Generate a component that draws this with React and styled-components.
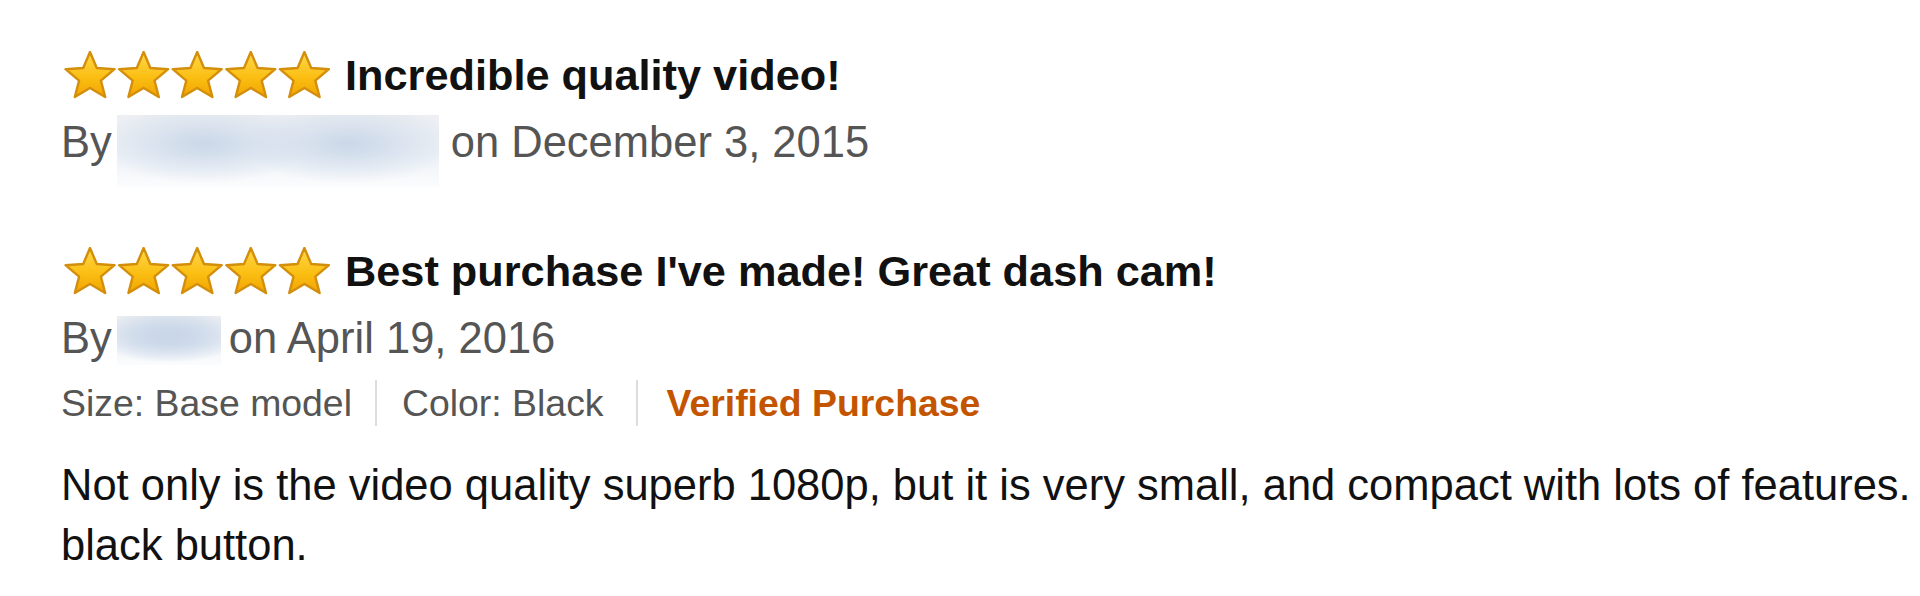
import React from 'react'
import styled, { createGlobalStyle } from 'styled-components'

const GlobalStyle = createGlobalStyle`
    html, body {
        margin: 0;
        padding: 0;
        background: #ffffff;
        overflow: hidden;
    }
    body {
        font-family: "Liberation Sans", Arial, sans-serif;
        color: #111111;
    }
`

const Page = styled.div`
    padding: 50px 0 0 61px;
    width: 1859px;
    height: 546px;
    overflow: hidden;
`

const Review = styled.div`
    display: flex;
    flex-direction: column;
    margin-top: ${props => props.$first ? 0 : 74}px;
`

const TitleRow = styled.div`
    display: flex;
    align-items: center;
    height: 50px;
`

const StarsSvg = styled.svg`
    flex-shrink: 0;
    margin-left: 2px;
`

const Title = styled.span`
    font-size: 43.3px;
    font-weight: bold;
    color: #111111;
    margin-left: 14px;
    white-space: nowrap;
`

const ByLine = styled.div`
    display: flex;
    align-items: center;
    height: 60px;
    margin-top: 12px;
    font-size: 43.5px;
    color: #555555;
    white-space: nowrap;
`

const NameBlur = styled.div`
    align-self: flex-start;
    width: ${props => props.$width}px;
    height: ${props => props.$height}px;
    margin-top: ${props => props.$top}px;
    margin-left: 5px;
    margin-right: ${props => props.$gap}px;
    flex-shrink: 0;
    background:
        radial-gradient(ellipse ${props => props.$spread}% 55% at ${props => props.$blobA}% 40%, rgba(200, 214, 232, 0.95), rgba(200, 214, 232, 0) 100%),
        radial-gradient(ellipse ${props => props.$spread}% 55% at ${props => props.$blobB}% 40%, rgba(200, 214, 232, 0.95), rgba(200, 214, 232, 0) 100%),
        linear-gradient(#edeff2, #eef2f7 55%, #fbfcfd);
`

const Meta = styled.div`
    display: flex;
    align-items: center;
    height: 50px;
    margin-top: 10px;
    font-size: 37.4px;
    color: #555555;
    white-space: nowrap;
`

const MetaItem = styled.span`
    display: flex;
    align-items: center;
    height: 46px;
    padding: 0 ${props => props.$verified ? 0 : 32}px 0 ${props => props.$verified ? 29 : 25}px;
    border-left: 2px solid #dddddd;
    color: ${props => props.$verified ? '#c45500' : '#555555'};
    font-weight: ${props => props.$verified ? 'bold' : 'normal'};

    &:first-child {
        padding-left: 0;
        padding-right: 23px;
        border-left: none;
    }
`

const Body = styled.p`
    margin: 27px 0 0;
    font-size: 43.5px;
    line-height: 60px;
    color: #111111;
    white-space: nowrap;
`

const STAR_POINTS = '27,1 33.8,17 51.5,18.2 37.9,29.6 42.2,46 27,37 11.8,46 16.1,29.6 2.5,18.2 20.2,17'

const Stars = ({ count = 5 }) => (
    <StarsSvg width="268" height="48" viewBox="0 0 268 48">
        <defs>
            <linearGradient id="starFill" x1="0" y1="0" x2="0" y2="1">
                <stop offset="0" stopColor="#ffd84a" />
                <stop offset="0.55" stopColor="#fbbf14" />
                <stop offset="1" stopColor="#f2a500" />
            </linearGradient>
        </defs>
        {
            Array.from({ length: count }).map((_, i) =>
                <polygon
                    key={i}
                    transform={`translate(${i * 53.6}, 0)`}
                    points={STAR_POINTS}
                    fill="url(#starFill)"
                    stroke="#d38f0c"
                    strokeWidth="2.4"
                    strokeLinejoin="round" />
            )
        }
    </StarsSvg>
)

const App = () => {
    return (
        <Page>
            <GlobalStyle />
            <Review $first>
                <TitleRow>
                    <Stars />
                    <Title>Incredible quality video!</Title>
                </TitleRow>
                <ByLine>
                    <span>By</span>
                    <NameBlur $width={322} $height={72} $top={3} $gap={12} $spread={34} $blobA={27} $blobB={72} />
                    <span>on December 3, 2015</span>
                </ByLine>
            </Review>

            <Review>
                <TitleRow>
                    <Stars />
                    <Title>Best purchase I've made! Great dash cam!</Title>
                </TitleRow>
                <ByLine>
                    <span>By</span>
                    <NameBlur $width={104} $height={49} $top={8} $gap={8} $spread={70} $blobA={50} $blobB={50} />
                    <span>on April 19, 2016</span>
                </ByLine>
                <Meta>
                    <MetaItem>Size: Base model</MetaItem>
                    <MetaItem>Color: Black</MetaItem>
                    <MetaItem $verified>Verified Purchase</MetaItem>
                </Meta>
                <Body>
                    Not only is the video quality superb 1080p, but it is very small, and compact with lots of features.
                    <br />
                    black button.
                </Body>
            </Review>
        </Page>
    )
}

export default App
